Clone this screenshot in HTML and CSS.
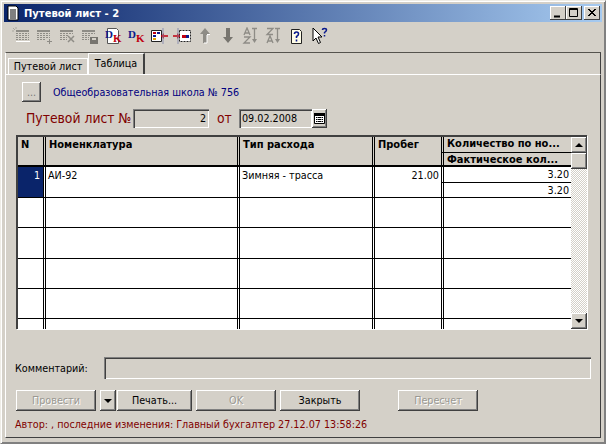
FILE: index.html
```html
<!DOCTYPE html>
<html lang="ru">
<head>
    <meta charset="UTF-8">
    <title>Путевой лист - 2</title>
    <link rel="stylesheet" href="styles.css">
</head>
<body>
    <div class="window">
        <!-- заголовок -->
        <div class="titlebar">
            <svg class="title-icon" width="16" height="16" viewBox="0 0 16 16">
                <path d="M3 1h8l2 2v12H3z" fill="#fff" stroke="#000"/>
                <path d="M5 5h6M5 7h6M5 9h6M5 11h6M5 13h6" stroke="#000"/>
            </svg>
            <span class="title-text">Путевой лист - 2</span>
            <div class="win-buttons">
                <div class="win-btn"><svg width="10" height="10" viewBox="0 0 10 10"><path d="M1 7.500h6v2H1z"/></svg></div>
                <div class="win-btn"><svg width="10" height="10" viewBox="0 0 10 10"><path d="M.5 .5h8v8h-8zM.5 1.500h8" fill="none" stroke="#000"/></svg></div>
                <div class="win-btn close"><svg width="10" height="10" viewBox="0 0 10 10"><path d="M1 1l7 7M2 1l7 7M8 1L1 8M9 1L2 8" stroke="#000"/></svg></div>
            </div>
        </div>

        <!-- панель инструментов -->
        <div class="toolbar">
            <svg class="tool" viewBox="0 0 18 18"><path d="M4 3h13v2H4z" fill="#8e8c86"/><path d="M4 6.500h13M4 8.500h13M4 10.500h13M4 12.500h13" stroke="#8e8c86" stroke-dasharray="2 1"/><path d="M4 14h14v1H4z" fill="#fff"/><path d="M1 1l2 2M4 0v2M0 4h2" stroke="#a8a69f"/></svg>
            <svg class="tool" viewBox="0 0 18 18"><path d="M2 3h13v2H2z" fill="#8e8c86"/><path d="M2 6.500h13M2 8.500h13M2 10.500h13M2 12.500h9" stroke="#8e8c86" stroke-dasharray="2 1"/><path d="M12 14.500h5M14.500 12v5" stroke="#8e8c86"/></svg>
            <svg class="tool" viewBox="0 0 18 18"><path d="M2 3h13v2H2z" fill="#8e8c86"/><path d="M2 6.500h13M2 8.500h9M2 10.500h7M2 12.500h7" stroke="#8e8c86" stroke-dasharray="2 1"/><path d="M10 9l6 6M16 9l-6 6" stroke="#8e8c86" stroke-width="1.500"/></svg>
            <svg class="tool" viewBox="0 0 18 18"><path d="M1 3h13v2H1z" fill="#8e8c86"/><path d="M1 6.500h13M1 8.500h8M1 10.500h7M1 12.500h7" stroke="#8e8c86" stroke-dasharray="2 1"/><path d="M9 10h8v7H9z" fill="#77756f"/><path d="M11 11h4v2h-4z" fill="#d4d0c8"/></svg>
            <svg class="tool" viewBox="0 0 18 18"><path d="M3.500 1.500h9l2 2v13h-11z" fill="#fff" stroke="#555"/><text class="dk" x="1" y="11"><tspan fill="#0a1a8c">D</tspan><tspan fill="#c00010" dy="4">K</tspan></text></svg>
            <svg class="tool" viewBox="0 0 18 18"><text class="dk" x="1" y="11"><tspan fill="#0a1a8c">D</tspan><tspan fill="#c00010" dy="4">K</tspan></text></svg>
            <svg class="tool" viewBox="0 0 18 18"><path d="M1.500 3.500h10v11h-10z" fill="#fff" stroke="#222"/><path d="M3 5h3v2H3z" fill="#c00010"/><path d="M7 5h3v2H7z" fill="#0a1a8c"/><path d="M3 8h3v2H3z" fill="#0a1a8c"/><path d="M3 11h3v2H3z" fill="#e0a000"/><path d="M11 9h7" stroke="#c00010" stroke-width="1.500"/><path d="M14 6l-3 3 3 3z" fill="#c00010"/><path d="M13 1v16" stroke="#8a8fb0"/></svg>
            <svg class="tool" viewBox="0 0 18 18"><path d="M6.500 3.500h11v11h-11z" fill="#fff" stroke="#222" stroke-dasharray="2 1"/><path d="M9 8h4v3H9z" fill="#c00010"/><path d="M13 8h3v3h-3z" fill="#0a1a8c"/><path d="M0 9h7" stroke="#c00010" stroke-width="1.500"/><path d="M4 6l3 3-3 3z" fill="#c00010"/><path d="M5 1v16" stroke="#8a8fb0"/></svg>
            <svg class="tool" viewBox="0 0 18 18"><path d="M9 1l5 6h-3v9H7V7H4z" fill="#8e8c86"/><path d="M11 8v8H8M14 7.500h-3" stroke="#fff" fill="none"/></svg>
            <svg class="tool" viewBox="0 0 18 18"><path d="M7 1h4v9h3l-5 6-5-6h3z" fill="#77756f"/></svg>
            <svg class="tool" viewBox="0 0 18 18"><path d="M2 8l3-7 3 7M3 6h4M2 10h6l-6 6h6" fill="none" stroke="#8e8c86" stroke-width="1.300"/><path d="M10 1.500h5M12.500 2v11" stroke="#8e8c86" stroke-width="1.300"/><path d="M10 12h5l-2.500 4z" fill="#8e8c86"/></svg>
            <svg class="tool" viewBox="0 0 18 18"><path d="M2 1.500h6l-6 6h6M2 16l3-7 3 7M3 14h4" fill="none" stroke="#8e8c86" stroke-width="1.300"/><path d="M10 1.500h5M12.500 2v11" stroke="#8e8c86" stroke-width="1.300"/><path d="M10 12h5l-2.500 4z" fill="#8e8c86"/></svg>
            <svg class="tool" viewBox="0 0 18 18"><path d="M3.500 2.500h8l2 2v12h-10z" fill="#fffde8" stroke="#222"/><path d="M6.500 7q0-2 2-2t2 2q0 1.500-2 2.500v1.500M8.500 12.500v2" fill="none" stroke="#0a1a8c" stroke-width="1.600"/></svg>
            <svg class="tool" viewBox="0 0 18 18"><path d="M2 1v13l3-3 2.500 5.500 2-1L7 10h4z" fill="#fff" stroke="#000"/><path d="M11.500 3q0-1.500 2-1.500t2 1.500q0 1-2 2.500v1M13.500 8v1.500" fill="none" stroke="#0a1a8c" stroke-width="1.500"/></svg>
        </div>

        <!-- вкладки -->
        <div class="tabs">
            <div class="tab">Путевой лист</div>
            <div class="tab active">Таблица</div>
        </div>

        <div class="panel">
            <div class="org-row">
                <div class="btn dots">...</div>
                <span class="org-name">Общеобразовательная школа № 756</span>
            </div>

            <div class="doc-row">
                <span class="doc-label">Путевой лист №</span>
                <div class="field number-field">2</div>
                <span class="doc-label from">от</span>
                <div class="field date-field">09.02.2008</div>
                <div class="btn calendar">
                    <svg width="11" height="11" viewBox="0 0 11 11"><path d="M.5 .5h10v10H.5z" fill="#fff" stroke="#000"/><path d="M0 0h11v3H0z"/><path d="M2 4.500h7M2 6.500h7M2 8.500h7M3 4v5M5.500 4v5M8 4v5" stroke="#000" stroke-dasharray="1 1"/></svg>
                </div>
            </div>

            <!-- таблица -->
            <div class="grid-wrap">
                <div class="grid">
                    <div class="head first">N</div>
                    <div class="head">Номенклатура</div>
                    <div class="head">Тип расхода</div>
                    <div class="head">Пробег</div>
                    <div class="head stack">
                        <div class="head-line">Количество по но...</div>
                        <div class="head-line">Фактическое кол...</div>
                    </div>

                    <div class="cell first row-no">1</div>
                    <div class="cell">АИ-92</div>
                    <div class="cell">Зимняя - трасса</div>
                    <div class="cell num">21.00</div>
                    <div class="cell stack">
                        <div class="sub num">3.20</div>
                        <div class="sub num">3.20</div>
                    </div>

                    <div class="cell first"></div><div class="cell"></div><div class="cell"></div><div class="cell"></div><div class="cell stack"></div>
                    <div class="cell first"></div><div class="cell"></div><div class="cell"></div><div class="cell"></div><div class="cell stack"></div>
                    <div class="cell first"></div><div class="cell"></div><div class="cell"></div><div class="cell"></div><div class="cell stack"></div>
                    <div class="cell first"></div><div class="cell"></div><div class="cell"></div><div class="cell"></div><div class="cell stack"></div>
                    <div class="cell first last"></div><div class="cell last"></div><div class="cell last"></div><div class="cell last"></div><div class="cell stack last"></div>
                </div>
                <div class="scrollbar">
                    <div class="btn sb-btn"><i class="arrow up"></i></div>
                    <div class="btn sb-thumb"></div>
                    <div class="sb-track"></div>
                    <div class="btn sb-btn"><i class="arrow down"></i></div>
                </div>
            </div>

            <div class="comment-row">
                <span class="comment-label">Комментарий:</span>
                <div class="field comment-field"></div>
            </div>

            <div class="button-row">
                <div class="btn action disabled">Провести</div>
                <div class="btn drop"><i class="arrow down"></i></div>
                <div class="btn action print">Печать...</div>
                <div class="btn action disabled">OK</div>
                <div class="btn action">Закрыть</div>
                <div class="btn action disabled recount">Пересчет</div>
            </div>

            <div class="status">Автор: , последние изменения: Главный бухгалтер 27.12.07 13:58:26</div>
        </div>
    </div>
</body>
</html>
```
FILE: styles.css
```css
* {
    box-sizing: border-box;
    margin: 0;
    padding: 0;
}

body {
    width: 606px;
    height: 444px;
    overflow: hidden;
    background: #d4d0c8;
    font-family: "DejaVu Sans Condensed", "DejaVu Sans", sans-serif;
    font-stretch: condensed;
    font-size: 10.700px;
    color: #000;
}

/* окно */
.window {
    width: 606px;
    height: 444px;
    padding: 4px 4px 0;
    background: #d4d0c8;
    border: 1px solid #808080;
    border-top-color: #eeece6;
    border-left-color: #eeece6;
    box-shadow: inset 1px 1px 0 #fff, inset -1px -1px 0 #808080;
}

.titlebar {
    display: flex;
    align-items: center;
    height: 18px;
    margin: -1px -1px 0;
    padding: 0 2px 0 1px;
    background: linear-gradient(to right, #0a246a, #a6caf0);
}

.title-icon {
    margin-right: 3px;
}

.title-text {
    color: #fff;
    font-size: 11.100px;
    font-weight: bold;
}

.win-buttons {
    display: flex;
    margin-left: auto;
}

.win-btn {
    display: flex;
    align-items: center;
    justify-content: center;
    width: 16px;
    height: 14px;
    background: #d4d0c8;
    box-shadow: inset -1px -1px 0 #404040, inset 1px 1px 0 #fff;
}

.win-btn.close {
    margin-left: 2px;
}

/* панель инструментов */
.toolbar {
    display: flex;
    gap: 5px;
    height: 30px;
    padding: 5px 0 0 7px;
}

.tool {
    width: 18px;
    height: 18px;
}

.dk {
    font-family: "Liberation Serif", serif;
    font-size: 11px;
    font-weight: bold;
}

/* вкладки */
.tabs {
    display: flex;
    align-items: flex-end;
    height: 22px;
    padding-left: 2px;
    border-top: 1px solid #55534e;
    border-left: 1px solid #fff;
    border-right: 1px solid #404040;
}

.tab {
    width: 80px;
    height: 16px;
    padding-top: 1px;
    text-align: center;
    background: #d4d0c8;
    border: 1px solid #fff;
    border-bottom: 0;
}

.tab.active {
    width: 57px;
    height: 21px;
    padding-top: 3px;
    border-right: 2px solid #404040;
}

.panel {
    height: 364px;
    padding: 7px 9px 0 10px;
    border-top: 1px solid #fff;
    border-left: 1px solid #fff;
    border-right: 1px solid #404040;
    border-bottom: 1px solid #404040;
}

.btn {
    display: flex;
    align-items: center;
    justify-content: center;
    background: #d4d0c8;
    box-shadow: inset -1px -1px 0 #404040, inset 1px 1px 0 #fff, inset -2px -2px 0 #808080;
}

.disabled {
    color: #9a9892;
    text-shadow: 1px 1px 0 #fff;
}

.field {
    background: #d4d0c8;
    box-shadow: inset 1px 1px 0 #808080, inset 2px 2px 0 #404040, inset -1px -1px 0 #fff;
}

/* шапка документа */
.org-row {
    display: flex;
    align-items: center;
    height: 20px;
    padding-left: 6px;
}

.dots {
    width: 19px;
    height: 20px;
    color: #777;
}

.org-name {
    margin-left: 12px;
    color: #000080;
}

.doc-row {
    display: flex;
    align-items: center;
    height: 20px;
    margin-top: 6px;
    padding-left: 9px;
}

.doc-label {
    width: 108px;
    padding-left: 1px;
    color: #800000;
    font-size: 13.800px;
    white-space: nowrap;
}

.doc-label.from {
    width: 30px;
    padding-left: 8px;
}

.number-field {
    width: 76px;
    height: 19px;
    padding: 3px 3px 0 0;
    text-align: right;
}

.date-field {
    width: 73px;
    height: 19px;
    padding: 3px 0 0 3px;
}

.calendar {
    width: 15px;
    height: 19px;
}

/* таблица */
.grid-wrap {
    display: flex;
    width: 571px;
    height: 194px;
    margin-top: 7px;
    border-top: 2px solid #404040;
    border-left: 2px solid #404040;
    box-shadow: 1px 1px 0 #fff;
}

.grid {
    display: grid;
    grid-template-columns: 26px 194px 135px 69px 129px;
    grid-template-rows: 30px 31px 30px 31px 30px 30px 10px;
    width: 553px;
    overflow: hidden;
    background: #fff;
}

/* двойная линия между колонками: фон даёт левую, рамка правую */
.head,
.cell {
    background-image: linear-gradient(#000, #000);
    background-size: 1px 100%;
    background-position: 1px 0;
    background-repeat: no-repeat;
    border-right: 1px solid #000;
}

.head {
    padding: 1px 0 0 5px;
    background-color: #d4d0c8;
    font-size: 11px;
    font-weight: bold;
    border-bottom: 2px solid #000;
}

.cell {
    padding: 2px 2px 0 4px;
    background-color: #fff;
    border-bottom: 1px solid #000;
}

.first {
    padding-left: 3px;
    background-image: none;
}

.cell.last {
    border-bottom: 0;
}

.stack,
.cell.stack {
    padding: 0;
    border-right: 0;
}

.head-line {
    height: 15px;
    padding: 0 0 0 5px;
    white-space: nowrap;
}

.head-line + .head-line {
    border-top: 1px solid #000;
}

.row-no {
    padding-right: 3px;
    color: #fff;
    text-align: right;
    background-color: #0a246a;
}

.num {
    text-align: right;
}

.sub {
    height: 15px;
    padding: 1px 2px 0 0;
}

.sub + .sub {
    border-top: 1px solid #000;
}

.scrollbar {
    display: flex;
    flex-direction: column;
    width: 16px;
}

.sb-btn,
.sb-thumb {
    flex: none;
    height: 16px;
}

.sb-track {
    flex: 1;
    background: repeating-conic-gradient(#d4d0c8 0 25%, #fff 0 50%) 0 0 / 2px 2px;
}

.arrow {
    width: 0;
    height: 0;
    border-left: 4px solid transparent;
    border-right: 4px solid transparent;
}

.arrow.up {
    border-bottom: 4px solid #000;
}

.arrow.down {
    border-top: 4px solid #000;
}

/* низ формы */
.comment-row {
    display: flex;
    align-items: center;
    height: 22px;
    margin-top: 28px;
}

.comment-label {
    width: 89px;
    margin-left: -1px;
}

.comment-field {
    width: 488px;
    height: 22px;
}

.button-row {
    display: flex;
    gap: 4px;
    height: 21px;
    margin-top: 11px;
}

.action {
    width: 80px;
}

.drop {
    width: 16px;
}

.print {
    width: 75px;
    margin-left: -3px;
}

.recount {
    margin-left: 34px;
}

.status {
    margin: 7px 0 0 -1px;
    color: #800000;
}
```
